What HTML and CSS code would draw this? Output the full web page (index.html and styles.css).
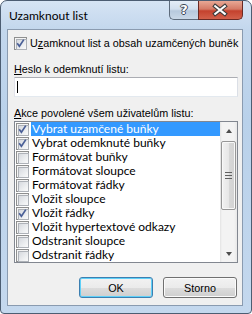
FILE: index.html
```html
<!DOCTYPE html>
<html lang="cs">
<head>
<meta charset="utf-8">
<link rel="stylesheet" href="styles.css">
</head>
<body>
<div class="window">
  <div class="titlebar">
    <span class="title">Uzamknout list</span>
    <div class="caption">
      <div class="cbtn help"><span class="q">?</span></div>
      <div class="cbtn close">
        <svg width="45" height="19" viewBox="0 0 45 19">
          <path d="M17 5 L27 13 M27 5 L17 13" stroke="#3a3a3a" stroke-width="4.4" stroke-linecap="square" fill="none"/>
          <path d="M17 5 L27 13 M27 5 L17 13" stroke="#fff" stroke-width="2.2" stroke-linecap="square" fill="none"/>
        </svg>
      </div>
    </div>
  </div>
  <div class="client">
    <div class="row main">
      <span class="cb"><svg class="tick" viewBox="0 0 13 13"><path d="M3.2 6.3 L5.4 9.2 L9.8 2.6" stroke="#4a5f97" stroke-width="1.7" fill="none"/></svg></span>
      <span>U<u>z</u>amknout list a obsah uzamčených buněk</span>
    </div>
    <div class="label"><u>H</u>eslo k odemknutí listu:</div>
    <div class="input"><span class="caret"></span></div>
    <div class="label label2"><u>A</u>kce povolené všem uživatelům listu:</div>
    <div class="listbox">
      <div class="items">
        <div class="item"><span class="cb"><svg class="tick" viewBox="0 0 13 13"><path d="M3.2 6.3 L5.4 9.2 L9.8 2.6" stroke="#4a5f97" stroke-width="1.7" fill="none"/></svg></span><span class="txt sel">Vybrat uzamčené buňky</span></div>
        <div class="item"><span class="cb"><svg class="tick" viewBox="0 0 13 13"><path d="M3.2 6.3 L5.4 9.2 L9.8 2.6" stroke="#4a5f97" stroke-width="1.7" fill="none"/></svg></span><span class="txt">Vybrat odemknuté buňky</span></div>
        <div class="item"><span class="cb"></span><span class="txt">Formátovat buňky</span></div>
        <div class="item"><span class="cb"></span><span class="txt">Formátovat sloupce</span></div>
        <div class="item"><span class="cb"></span><span class="txt">Formátovat řádky</span></div>
        <div class="item"><span class="cb"></span><span class="txt">Vložit sloupce</span></div>
        <div class="item"><span class="cb"><svg class="tick" viewBox="0 0 13 13"><path d="M3.2 6.3 L5.4 9.2 L9.8 2.6" stroke="#4a5f97" stroke-width="1.7" fill="none"/></svg></span><span class="txt">Vložit řádky</span></div>
        <div class="item"><span class="cb"></span><span class="txt">Vložit hypertextové odkazy</span></div>
        <div class="item"><span class="cb"></span><span class="txt">Odstranit sloupce</span></div>
        <div class="item"><span class="cb"></span><span class="txt">Odstranit řádky</span></div>
      </div>
      <div class="scrollbar">
        <div class="sbtn"><span class="arrow up"></span></div>
        <div class="track"><div class="thumb"><span class="grip"></span></div></div>
        <div class="sbtn"><span class="arrow down"></span></div>
      </div>
    </div>
    <div class="buttons">
      <button class="btn default">OK</button>
      <button class="btn">Storno</button>
    </div>
  </div>
</div>
</body>
</html>
```
FILE: styles.css
```css
* { box-sizing: border-box; margin: 0; padding: 0; }
html, body { width: 252px; height: 314px; overflow: hidden; background: #ffffff; }
body { font-family: "Liberation Sans", Arial, sans-serif; font-size: 10.8px; color: #000; }

.window {
  width: 252px; height: 314px;
  border: 1px solid #4c5d72;
  border-radius: 7px 7px 4px 4px;
  background: linear-gradient(180deg, #d6e4f4 0px, #c3d7ed 28px, #b9d1ea 120px, #c4d8ee 100%);
  display: flex; flex-direction: column;
  padding: 0 8px 7px 6px;
}

.titlebar { height: 28px; display: flex; align-items: flex-start; flex: none; }
.title { padding: 7px 0 0 2px; line-height: 16px; font-family: Lato, sans-serif; font-size: 12px; }
.caption { margin-left: auto; display: flex; }
.cbtn { height: 19px; border: 1px solid #5d6b7c; border-top: none; display: flex; align-items: center; justify-content: center; }
.help {
  width: 29px;
  border-radius: 0 0 0 5px;
  border-right: none;
  background: linear-gradient(180deg, #e4edf7 0%, #d2dfee 45%, #b7c9dd 55%, #c9d8e8 100%);
}
.q { color: #fff; font-family: "DejaVu Sans", sans-serif; font-weight: bold; font-size: 13px; line-height: 16px;
  text-shadow: -1px 0 #3b4656, 1px 0 #3b4656, 0 -1px #3b4656, 0 1px #3b4656; }
.close {
  width: 45px;
  border-radius: 0 0 5px 0;
  border-color: #6a2a24;
  background: linear-gradient(180deg, #e8a895 0%, #d47a66 45%, #c4422e 55%, #d2604a 100%);
}
.close svg { display: block; }

.client {
  flex: 1;
  border: 1px solid #8a9bb0;
  background: #f0f0f0;
  padding: 5px 4px 7px 6px;
  display: flex; flex-direction: column;
}

.row { display: flex; align-items: center; height: 16px; line-height: 16px; white-space: nowrap; }
.row .cb { margin-right: 3px; }

.cb {
  width: 13px; height: 13px; flex: none; position: relative;
  border: 1px solid #8e8f8f; background: #f4f4f4; padding: 1px;
}
.cb::before {
  content: ""; display: block; width: 9px; height: 9px;
  border: 1px solid #aeb2b8;
  background: linear-gradient(135deg, #d6d9de 0%, #eceef0 60%, #fafafa 100%);
}
.tick { position: absolute; left: -1px; top: -1px; width: 13px; height: 13px; }

.label { margin-top: 10px; height: 16px; line-height: 16px; white-space: nowrap; }
.label2 { margin-top: 8px; }

.input {
  height: 20px; background: #fff;
  border: 1px solid #abadb3; border-color: #abadb3 #dbdfe6 #e3e9ef #e2e3ea;
  padding: 3px 0 0 2px;
}
.caret { display: block; width: 1px; height: 12px; background: #000; }

.listbox {
  height: 142px; border: 1px solid #828790; background: #fff;
  display: flex;
}
.items { flex: 1; display: flex; flex-direction: column; font-family: Lato, sans-serif; font-size: 12px; }
.item { height: 14px; display: flex; align-items: center; padding-left: 1px; white-space: nowrap; }
.txt { flex: 1; height: 14px; line-height: 14px; margin-left: 2px; padding-left: 1px; }
.txt.sel { background: #3399ff; color: #fff; }

.scrollbar {
  width: 17px; flex: none; display: flex; flex-direction: column;
  background: linear-gradient(90deg, #e3e3e3 0, #f3f3f3 2px, #f3f3f3 14px, #e8e8e8 100%);
}
.sbtn { height: 17px; display: flex; align-items: center; justify-content: center; }
.arrow { width: 0; height: 0; border-left: 3.5px solid transparent; border-right: 3.5px solid transparent; }
.arrow.up { border-bottom: 4px solid #4d4d4d; }
.arrow.down { border-top: 4px solid #4d4d4d; }
.track { flex: 1; padding: 2px 1px 0 1px; }
.thumb {
  height: 69px; border: 1px solid #979797; border-radius: 2px;
  background: linear-gradient(90deg, #f2f2f2 0%, #e7e7e7 50%, #d8d8d8 51%, #d2d2d2 100%);
  box-shadow: inset 0 0 0 1px #f8f8f8;
  display: flex; align-items: center; justify-content: center;
}
.grip {
  width: 7px; height: 7px;
  background: linear-gradient(180deg, #606060 0, #606060 1px, transparent 1px, transparent 3px, #606060 3px, #606060 4px, transparent 4px, transparent 6px, #606060 6px, #606060 7px);
}

.buttons { margin-top: 14px; display: flex; justify-content: flex-end; gap: 10px; padding-right: 1px; }
.btn {
  width: 74px; height: 21px;
  font-family: inherit; font-size: 10.8px; color: #000;
  border: 1px solid #707070; border-radius: 3px;
  background: linear-gradient(180deg, #f2f2f2 0%, #ebebeb 50%, #dddddd 51%, #cfcfcf 100%);
  box-shadow: inset 0 0 0 1px #fbfbfb;
}
.btn.default {
  border-color: #3c7fb1;
  box-shadow: inset 0 0 0 1px #5fd0f8;
}
```
